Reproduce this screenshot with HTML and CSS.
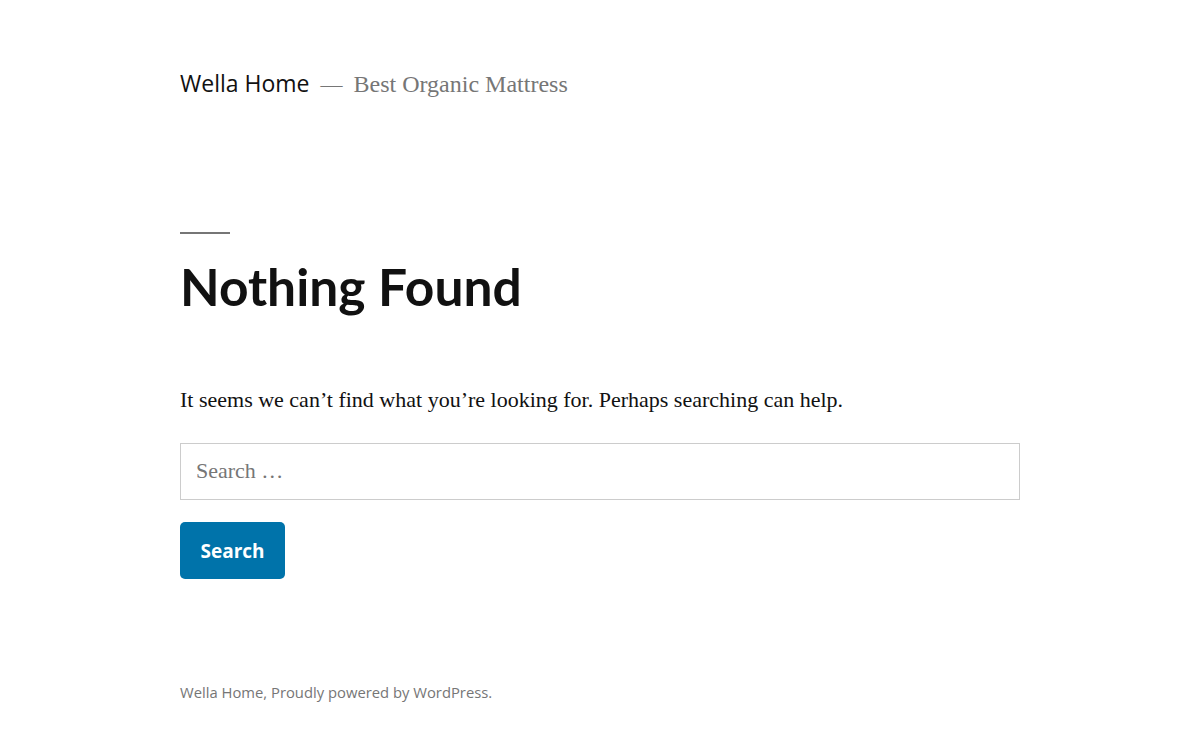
FILE: index.html
```html
<!DOCTYPE html>
<html lang="en">
<head>
<meta charset="utf-8">
<title>Nothing Found – Wella Home</title>
<link rel="stylesheet" href="styles.css">
</head>
<body>
<div class="page">
  <header class="site-header">
    <p class="branding"><a class="site-title" href="#">Wella Home</a><span class="sep">—</span><span class="site-description">Best Organic Mattress</span></p>
  </header>
  <main class="site-main">
    <header class="page-header">
      <h1 class="page-title">Nothing Found</h1>
    </header>
    <div class="page-content">
      <p class="lead">It seems we can’t find what you’re looking for. Perhaps searching can help.</p>
      <form class="search-form">
        <input class="search-field" type="search" placeholder="Search …">
        <button class="search-submit" type="button">Search</button>
      </form>
    </div>
  </main>
  <footer class="site-footer">
    <p class="site-info"><a href="#">Wella Home</a>, <a href="#">Proudly powered by WordPress</a>.</p>
  </footer>
</div>
</body>
</html>
```
FILE: styles.css
```css
html, body {
  margin: 0;
  padding: 0;
  background: #fff;
}
body {
  font-family: "Liberation Serif", "Times New Roman", serif;
  font-size: 22px;
  color: #111;
}
a {
  color: inherit;
  text-decoration: none;
}
.page {
  padding: 0 180px;
}
.site-header {
  padding-top: 66px;
}
.branding {
  margin: 0;
  line-height: 34px;
  display: flex;
  align-items: baseline;
}
.site-title {
  font-family: "Open Sans", "Noto Sans", sans-serif;
  font-size: 23px;
  color: #111;
}
.sep {
  color: #767676;
  margin: 0 11px;
  font-size: 22px;
}
.site-description {
  font-size: 24px;
  color: #767676;
}
.site-main {
  padding-top: 130px;
}
.page-header {
  margin: 0;
}
.page-title {
  margin: 0;
  font-family: "Lato", "Open Sans", sans-serif;
  font-weight: 700;
  font-size: 51.5px;
  line-height: 62px;
  color: #111;
}
.page-title::before {
  content: "";
  display: block;
  width: 50px;
  height: 2px;
  background: #767676;
  margin-bottom: 21px;
}
.page-content {
  padding-top: 65px;
}
.lead {
  margin: 0 0 25px;
  line-height: 36px;
}
.search-form {
  display: flex;
  flex-direction: column;
  align-items: flex-start;
  gap: 22px;
}
.search-field {
  box-sizing: border-box;
  width: 100%;
  height: 57px;
  border: 1px solid #ccc;
  padding: 0 15px 2px;
  font-family: "Liberation Serif", "Times New Roman", serif;
  font-size: 22px;
  color: #111;
  background: #fff;
  outline: none;
}
.search-field::placeholder {
  color: #767676;
}
.search-submit {
  box-sizing: border-box;
  height: 57px;
  width: 105px;
  background: #0073aa;
  color: #fff;
  border: 0;
  border-radius: 5px;
  font-family: "Open Sans", "Noto Sans", sans-serif;
  font-weight: 700;
  font-size: 19px;
}
.site-footer {
  padding-top: 103px;
}
.site-info {
  margin: 0;
  font-family: "Open Sans", "Noto Sans", sans-serif;
  font-size: 14.8px;
  color: #767676;
}
```
